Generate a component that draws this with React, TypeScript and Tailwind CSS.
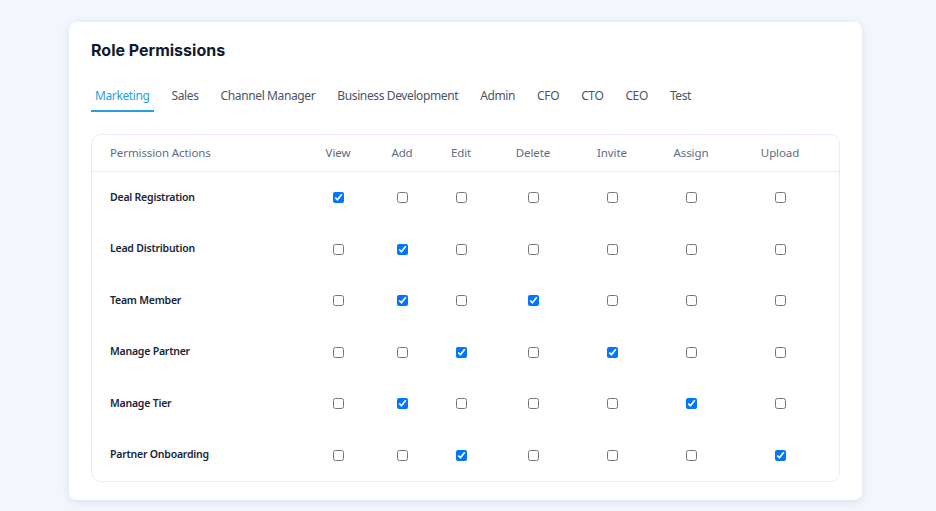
import { useState } from "react";

const tabs = [
  "Marketing",
  "Sales",
  "Channel Manager",
  "Business Development",
  "Admin",
  "CFO",
  "CTO",
  "CEO",
  "Test",
];

const actions = ["View", "Add", "Edit", "Delete", "Invite", "Assign", "Upload"];

const initialRows: { name: string; checked: boolean[] }[] = [
  { name: "Deal Registration", checked: [true, false, false, false, false, false, false] },
  { name: "Lead Distribution", checked: [false, true, false, false, false, false, false] },
  { name: "Team Member", checked: [false, true, false, true, false, false, false] },
  { name: "Manage Partner", checked: [false, false, true, false, true, false, false] },
  { name: "Manage Tier", checked: [false, true, false, false, false, true, false] },
  { name: "Partner Onboarding", checked: [false, false, true, false, false, false, true] },
];

const gridCols = "grid grid-cols-[214px_64px_64px_54px_90px_68px_90px_88px]";

export default function App() {
  const [active, setActive] = useState("Marketing");
  const [rows, setRows] = useState(initialRows);

  function toggle(rowIndex: number, colIndex: number) {
    setRows((prev) =>
      prev.map((row, i) =>
        i === rowIndex
          ? { ...row, checked: row.checked.map((c, j) => (j === colIndex ? !c : c)) }
          : row
      )
    );
  }

  return (
    <div
      className="min-h-[511px] bg-[#f3f7fd] pl-[69px] pt-[22px]"
      style={{ fontFamily: '"Noto Sans", "Open Sans", sans-serif' }}
    >
      <div className="w-[793px] rounded-[8px] bg-white px-[22px] pb-[18px] pt-[16px] shadow-[0_2px_10px_rgba(30,60,120,0.12)]">
        <h1 className="font-['Inter',sans-serif] text-[16px] font-bold leading-[24px] text-[#0f1b2d]">
          Role Permissions
        </h1>

        <div className="mt-[25px] flex gap-[14px]">
          {tabs.map((tab) => {
            const selected = tab === active;
            return (
              <button
                key={tab}
                type="button"
                onClick={() => setActive(tab)}
                className={`border-b-2 px-[4px] pb-[5px] text-[12px] leading-[18px] tracking-[-0.38px] ${
                  selected
                    ? "border-[#2a9fe0] text-[#2a9fe0]"
                    : "border-transparent text-[#4a5568]"
                }`}
              >
                {tab}
              </button>
            );
          })}
        </div>

        <div className="mt-[22px] rounded-[10px] border border-[#e4eefb]">
          <div className={`${gridCols} h-[37px] items-center border-b border-[#e4eefb] text-[11.5px] tracking-[-0.1px] text-[#5f6b7d]`}>
            <div className="pl-[18px]">Permission Actions</div>
            {actions.map((a) => (
              <div key={a} className="text-center">
                {a}
              </div>
            ))}
          </div>

          {rows.map((row, i) => (
            <div key={row.name} className={`${gridCols} h-[51.5px] items-center`}>
              <div className="pl-[18px] text-[10.5px] font-semibold tracking-[-0.22px] text-[#1a2538]">
                {row.name}
              </div>
              {row.checked.map((c, j) => (
                <div key={j} className="flex justify-center">
                  <input
                    type="checkbox"
                    checked={c}
                    onChange={() => toggle(i, j)}
                    className="m-0 h-[11px] w-[11px]"
                  />
                </div>
              ))}
            </div>
          ))}
        </div>
      </div>
    </div>
  );
}
